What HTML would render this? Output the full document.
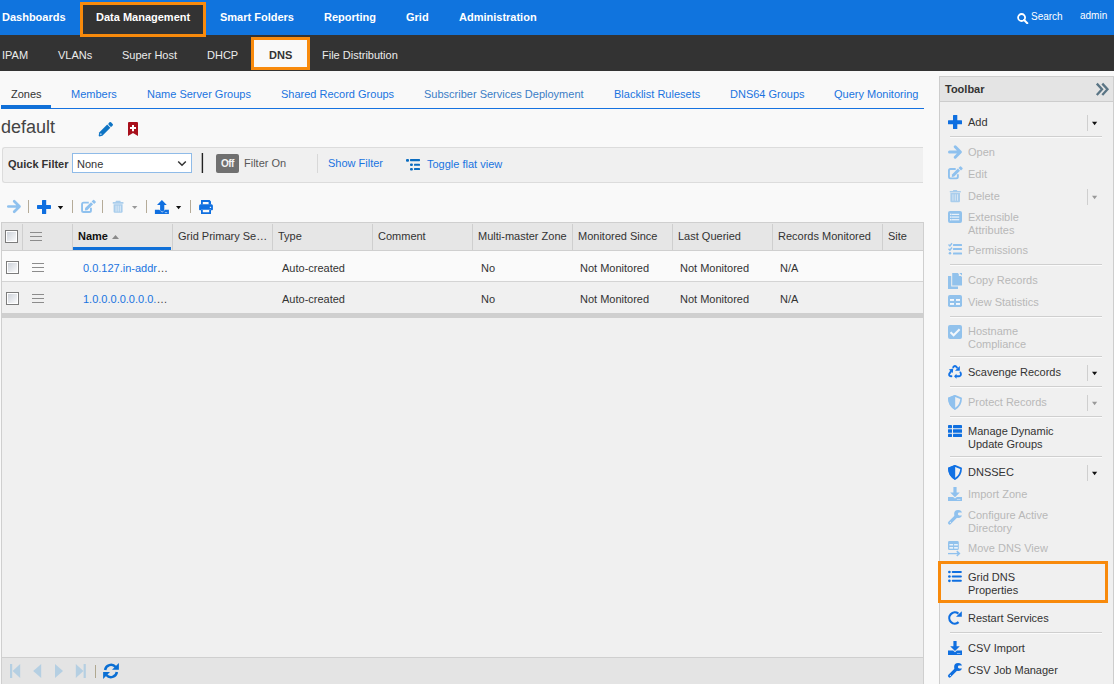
<!DOCTYPE html>
<html><head><meta charset="utf-8">
<style>
*{margin:0;padding:0;box-sizing:border-box}
html,body{width:1114px;height:684px;overflow:hidden;background:#f9f9f9;font-family:"Liberation Sans",sans-serif;font-size:11px;color:#333}
.a{position:absolute}
.t{position:absolute;white-space:nowrap;font-size:11px;line-height:13px}
.b{font-weight:bold}
#top{left:0;top:0;width:1114px;height:35px;background:#1074de}
#sub{left:0;top:35px;width:1114px;height:36px;background:#333}
.nw{color:#fff}
.sw{color:#ececec}
.lk{color:#1a74e0}
.dis{color:#b8b8b8}
.hl{border:3px solid #f88a0c}
.csep{top:224px;width:1px;height:26px;background:#cfcfcf}
.cb{width:13px;height:13px;border:1px solid #7c7c7c;background:linear-gradient(135deg,#c9ced6 0%,#f4f5f7 80%,#fff 100%);box-shadow:inset 0 0 0 1px #fff}
.hb{width:12px;height:9px;border-top:1px solid #8c8c8c;border-bottom:1px solid #8c8c8c}
.hb:after{content:"";position:absolute;left:0;top:3px;width:12px;height:1px;background:#8c8c8c}
</style></head><body>
<!-- top nav -->
<div id="top" class="a"></div>
<div id="sub" class="a"></div>
<div class="a hl" style="left:80px;top:2px;width:126px;height:35px;background:#333"></div>
<div class="t b nw" style="left:2px;top:11px">Dashboards</div>
<div class="t b nw" style="left:96px;top:11px">Data Management</div>
<div class="t b nw" style="left:220px;top:11px">Smart Folders</div>
<div class="t b nw" style="left:324px;top:11px">Reporting</div>
<div class="t b nw" style="left:406px;top:11px">Grid</div>
<div class="t b nw" style="left:459px;top:11px">Administration</div>
<svg class="a" style="left:1017px;top:12px" width="12" height="12" viewBox="0 0 12 12"><circle cx="4.6" cy="5.5" r="3.5" fill="none" stroke="#fff" stroke-width="1.8"/><path d="M7.1 8L10.3 11.2" stroke="#fff" stroke-width="2" stroke-linecap="round"/></svg>
<div class="t nw" style="left:1031px;top:10px;font-size:10px">Search</div>
<div class="t nw" style="left:1080px;top:9px;font-size:10px">admin</div>
<!-- subnav -->
<div class="a hl" style="left:251px;top:37px;width:59px;height:33px;background:#f9f9f9"></div>
<div class="t sw" style="left:2px;top:49px">IPAM</div>
<div class="t sw" style="left:58px;top:49px">VLANs</div>
<div class="t sw" style="left:122px;top:49px">Super Host</div>
<div class="t sw" style="left:207px;top:49px">DHCP</div>
<div class="t b" style="left:269px;top:49px;color:#333">DNS</div>
<div class="t sw" style="left:322px;top:49px">File Distribution</div>
<!-- tabs -->
<div class="a" style="left:1px;top:108px;width:923px;height:1px;background:#1672e0"></div>
<div class="a" style="left:1px;top:105px;width:50px;height:4px;background:#1070d8"></div>
<div class="t" style="left:11px;top:88px">Zones</div>
<div class="t lk" style="left:71px;top:88px">Members</div>
<div class="t lk" style="left:147px;top:88px">Name Server Groups</div>
<div class="t lk" style="left:281px;top:88px">Shared Record Groups</div>
<div class="t" style="left:424px;top:88px;color:#3b7ec6">Subscriber Services Deployment</div>
<div class="t lk" style="left:614px;top:88px">Blacklist Rulesets</div>
<div class="t lk" style="left:730px;top:88px">DNS64 Groups</div>
<div class="t lk" style="left:834px;top:88px">Query Monitoring</div>
<!-- title -->
<div class="t" style="left:1px;top:117px;font-size:18px;line-height:20px;color:#444">default</div>

<!-- filter bar -->
<div class="a" style="left:2px;top:147px;width:921px;height:36px;background:#f0f0f0;border:1px solid #dcdcdc;border-right:none;border-radius:3px 0 0 3px"></div>
<div class="t b" style="left:8px;top:158px">Quick Filter</div>
<div class="a" style="left:72px;top:153px;width:120px;height:20px;background:#fff;border:1px solid #8fbbe8"></div>
<div class="t" style="left:77px;top:158px">None</div>
<svg class="a" style="left:200px;top:153px" width="5" height="21" viewBox="0 0 5 21"><rect x="1.7" y="0" width="1.4" height="20" fill="#222"/></svg>
<div class="a" style="left:216px;top:154px;width:23px;height:19px;background:#707070;border-radius:2px"></div>
<div class="t b" style="left:221px;top:157px;color:#f4f4f4;font-size:10px;letter-spacing:-0.6px">Off</div>
<div class="t" style="left:244px;top:157px;color:#585858">Filter On</div>
<div class="a" style="left:317px;top:154px;width:1px;height:19px;background:#d8d8d8"></div>
<div class="t lk" style="left:328px;top:157px">Show Filter</div>
<div class="t lk" style="left:427px;top:158px">Toggle flat view</div>

<!-- title icons -->
<svg class="a" style="left:98px;top:121px" width="16" height="16" viewBox="0 0 16 16">
<g fill="#0e74c4"><path d="M1.2 11.6L9.2 3.6 12.4 6.8 4.4 14.8 1.4 15.4Q0.6 15.4 0.7 14.6Z"/><rect x="10.4" y="1.66" width="4.5" height="3.4" rx="1.1" transform="rotate(45 12.64 3.36)"/></g>
<circle cx="2.8" cy="13.2" r="0.9" fill="#9cc6e8"/>
</svg>
<svg class="a" style="left:128px;top:122px" width="10" height="14" viewBox="0 0 10 14">
<path d="M0 1Q0 0 1 0H9Q10 0 10 1V14L5 11L0 14Z" fill="#a8101c"/>
<path d="M4 3H6V5.1H8V7.1H6V9.2H4V7.1H2V5.1H4Z" fill="#fff"/>
</svg>
<!-- filter icons -->
<svg class="a" style="left:177px;top:160px" width="10" height="7" viewBox="0 0 10 7"><path d="M1.2 1.5L5 5.3L8.8 1.5" fill="none" stroke="#333" stroke-width="1.5"/></svg>
<svg class="a" style="left:406px;top:157px" width="16" height="16" viewBox="0 0 16 16">
<g fill="#0a6cc0"><rect x="0" y="1.9" width="3" height="2.9" rx="1"/><rect x="4" y="2.1" width="10" height="2.1" rx="0.6"/><rect x="4" y="6.5" width="2.9" height="2.5" rx="1"/><rect x="8" y="6.7" width="6" height="2.1" rx="0.6"/><rect x="4" y="10.9" width="2.9" height="2.6" rx="1"/><rect x="8" y="10.9" width="6" height="2.1" rx="0.6"/></g>
</svg>
<!-- grid toolbar -->
<svg class="a" style="left:0px;top:197px" width="220" height="20" viewBox="0 0 220 20">
<g fill="none" stroke="#8fc1ee" stroke-width="2.7" stroke-linecap="round" stroke-linejoin="round"><path d="M8.3 9.5H19.3M14.2 4.2L19.5 9.5L14.2 14.8"/></g>
<g fill="#b5ab98"><rect x="28" y="3" width="1" height="13"/><rect x="72" y="3" width="1" height="13"/><rect x="102" y="3" width="1" height="13"/><rect x="146" y="3" width="1" height="13"/><rect x="190" y="3" width="1" height="13"/></g>
<g fill="#0f6fe0"><rect x="42" y="3" width="4.2" height="14" rx="0.6"/><rect x="37" y="7.9" width="14" height="4" rx="0.6"/></g>
<path d="M57.8 9H63.2L60.5 12.4Z" fill="#111"/>
<path d="M88.8 5.65H83.6Q82.05 5.65 82.05 7.2V13.4Q82.05 14.95 83.6 14.95H89.4Q90.95 14.95 90.95 13.4V10.8" fill="none" stroke="#8fc1ee" stroke-width="1.9"/>
<path d="M85.14 11.04L91 5.2 93.1 7.3 87.26 13.16 84.9 13.5Z" fill="#8fc1ee"/>
<path d="M91.6 4.6L93.1 3.1Q93.6 2.6 94.1 3.1L95.6 4.6Q96.1 5.1 95.6 5.6L94.1 7.1Z" fill="#8fc1ee"/>
<g fill="#a9cdec"><rect x="115.6" y="3.8" width="5" height="1.5" rx="0.5"/><rect x="112.7" y="5" width="10.8" height="1.8" rx="0.5"/><path d="M113.6 7.3H122.6V14.6Q122.6 15.8 121.4 15.8H114.8Q113.6 15.8 113.6 14.6Z"/></g>
<g fill="#e6f0f8"><rect x="115.6" y="8.6" width="0.9" height="6"/><rect x="117.7" y="8.6" width="0.9" height="6"/><rect x="119.8" y="8.6" width="0.9" height="6"/></g>
<path d="M132 9H137.4L134.7 12Z" fill="#999"/>
<g fill="#0f6fe0"><path d="M161.9 3L166.8 8H164.3V13.6L162.2 14.8L160.1 13.6V8H157Z"/><path d="M154.9 12.7H159.3L162.2 15.4L165.1 12.7H168.9V17H154.9Z"/></g>
<rect x="164.8" y="15.3" width="2.4" height="0.8" fill="#bcd8f5"/>
<path d="M176 9H181.2L178.6 12.2Z" fill="#111"/>
<g fill="#0f6fe0"><path d="M201 3H209.6L211 4.4V7.5H208.6V5.1H202.8V7.5H201Z"/><path d="M200.6 7.2H211.4Q212.9 7.2 212.9 8.7V12.4Q212.9 13.2 212.1 13.2H211V12.6H201V13.2H199.9Q199.1 13.2 199.1 12.4V8.7Q199.1 7.2 200.6 7.2Z"/><path d="M201 12.6H211V17H201ZM202.8 13V15.2H209.2V13Z" fill-rule="evenodd"/></g>
<rect x="209.8" y="9.8" width="1.3" height="1.1" fill="#fff"/>
</svg>
<!-- grid -->
<div class="a" style="left:1px;top:222px;width:923px;height:462px;background:#f0f0f0;border:1px solid #cfcfcf;border-bottom:none"></div>
<div class="a" style="left:2px;top:223px;width:921px;height:28px;background:#e6e6e6;border-bottom:1px solid #cfcfcf"></div>
<div class="a" style="left:2px;top:251px;width:921px;height:31px;background:#fafafa;border-bottom:1px solid #d4d4d4"></div>
<div class="a" style="left:2px;top:282px;width:921px;height:31px;background:#f0f0f0"></div>
<div class="a" style="left:2px;top:313px;width:921px;height:5px;background:#cfcfcf"></div>
<div class="a" style="left:2px;top:657px;width:921px;height:27px;background:#e4e4e4;border-top:1px solid #cfcfcf"></div>
<div class="a csep" style="left:22px"></div>
<div class="a csep" style="left:72px"></div>
<div class="a csep" style="left:172px"></div>
<div class="a csep" style="left:272px"></div>
<div class="a csep" style="left:372px"></div>
<div class="a csep" style="left:472px"></div>
<div class="a csep" style="left:572px"></div>
<div class="a csep" style="left:672px"></div>
<div class="a csep" style="left:772px"></div>
<div class="a csep" style="left:882px"></div>
<div class="a" style="left:73px;top:247px;width:98px;height:3px;background:#1070d8"></div>
<div class="a cb" style="left:5px;top:230px"></div>
<div class="a cb" style="left:6px;top:261px"></div>
<div class="a cb" style="left:6px;top:292px"></div>
<div class="a hb" style="left:30px;top:232px"></div>
<div class="a hb" style="left:32px;top:263px"></div>
<div class="a hb" style="left:32px;top:294px"></div>
<svg class="a" style="left:112px;top:235px" width="7" height="4" viewBox="0 0 7 4"><path d="M0 4L3.5 0L7 4Z" fill="#8a8a8a"/></svg>

<div class="t b" style="left:78px;top:230px;color:#111">Name</div>
<div class="t" style="left:178px;top:230px">Grid Primary Se&hellip;</div>
<div class="t" style="left:278px;top:230px">Type</div>
<div class="t" style="left:378px;top:230px">Comment</div>
<div class="t" style="left:478px;top:230px">Multi-master Zone</div>
<div class="t" style="left:578px;top:230px">Monitored Since</div>
<div class="t" style="left:678px;top:230px">Last Queried</div>
<div class="t" style="left:778px;top:230px">Records Monitored</div>
<div class="t" style="left:888px;top:230px">Site</div>

<div class="t lk" style="left:83px;top:262px">0.0.127.in-addr<span style="color:#444">&hellip;</span></div>
<div class="t" style="left:282px;top:262px">Auto-created</div>
<div class="t" style="left:481px;top:262px">No</div>
<div class="t" style="left:580px;top:262px">Not Monitored</div>
<div class="t" style="left:680px;top:262px">Not Monitored</div>
<div class="t" style="left:780px;top:262px">N/A</div>
<div class="t lk" style="left:83px;top:293px">1.0.0.0.0.0.0.0.<span style="color:#444">&hellip;</span></div>
<div class="t" style="left:282px;top:293px">Auto-created</div>
<div class="t" style="left:481px;top:293px">No</div>
<div class="t" style="left:580px;top:293px">Not Monitored</div>
<div class="t" style="left:680px;top:293px">Not Monitored</div>
<div class="t" style="left:780px;top:293px">N/A</div>

<!-- pager -->
<svg class="a" style="left:10px;top:664px" width="90" height="16" viewBox="0 0 90 16">
<g fill="#b5cfe2"><rect x="0" y="0" width="2.2" height="14"/><path d="M10.2 0V14L2.6 7Z"/>
<path d="M31.2 0V14L23.2 7Z"/><path d="M45 0V14L53 7Z"/>
<path d="M65.8 0V14L73.4 7Z"/><rect x="73.6" y="0" width="2.2" height="14"/></g>
<rect x="85" y="1" width="1" height="13" fill="#b0a890"/>
</svg>
<svg class="a" style="left:98px;top:658px" width="26" height="26" viewBox="0 0 26 26">
<g fill="none" stroke="#0a6fd4" stroke-width="2.5"><path d="M7.1 12A6 6 0 0 1 17.6 9"/><path d="M18.9 14A6 6 0 0 1 8.4 17"/></g>
<path d="M20.9 4.9V11.8H14Z" fill="#0a6fd4"/><path d="M5.1 21V14H12Z" fill="#0a6fd4"/>
</svg>
<!-- toolbar panel -->
<div class="a" style="left:939px;top:76px;width:175px;height:620px;background:#f0f0f0;border:1px solid #cdcdcd"></div>
<div class="a" style="left:940px;top:77px;width:173px;height:25px;background:#e4e4e4;border-bottom:1px solid #cdcdcd"></div>
<div class="t b" style="left:945px;top:83px;font-size:11px">Toolbar</div>
<!-- panel icons -->
<svg class="a" style="left:940px;top:78px" width="174" height="606" viewBox="940 78 174 606">
<!-- >> -->
<g fill="none" stroke="#5a7585" stroke-width="2.3"><path d="M1096.8 83.6L1102 89.3L1096.8 95M1102.3 83.6L1107.5 89.3L1102.3 95"/></g>
<!-- add -->
<g fill="#0f6fe0"><rect x="953" y="115" width="4.3" height="14" rx="0.5"/><rect x="948" y="120.2" width="14" height="4.1" rx="0.5"/></g>
<!-- open -->
<g fill="none" stroke="#8fc1ee" stroke-width="3" stroke-linecap="round" stroke-linejoin="round"><path d="M949.5 152H960M955.2 146.8L960.4 152L955.2 157.2"/></g>
<!-- edit -->
<g transform="translate(866.9 163.4)">
<path d="M88.8 5.65H83.6Q82.05 5.65 82.05 7.2V13.4Q82.05 14.95 83.6 14.95H89.4Q90.95 14.95 90.95 13.4V10.8" fill="none" stroke="#8fc1ee" stroke-width="1.9"/>
<path d="M85.14 11.04L91 5.2 93.1 7.3 87.26 13.16 84.9 13.5Z" fill="#8fc1ee"/>
<path d="M91.6 4.6L93.1 3.1Q93.6 2.6 94.1 3.1L95.6 4.6Q96.1 5.1 95.6 5.6L94.1 7.1Z" fill="#8fc1ee"/>
</g>
<!-- delete -->
<g fill="#a9cdec"><rect x="953" y="190" width="4.2" height="1.4" rx="0.4"/><rect x="949.7" y="191" width="11.2" height="1.5" rx="0.4"/><path d="M950.4 193H960V201Q960 202.2 958.8 202.2H951.6Q950.4 202.2 950.4 201Z"/></g>
<g fill="#dce9f5"><rect x="952.5" y="194.3" width="0.9" height="6.4"/><rect x="954.8" y="194.3" width="0.9" height="6.4"/><rect x="957" y="194.3" width="0.9" height="6.4"/></g>
<!-- ext attrs -->
<rect x="948" y="211" width="14" height="12" rx="2" fill="#92c2ec"/>
<g fill="#f4f8fc"><rect x="951.6" y="213.8" width="7.6" height="1.1"/><rect x="951.6" y="216.5" width="7.6" height="1.1"/><rect x="951.6" y="219.2" width="7.6" height="1.1"/><rect x="950.1" y="213.6" width="1.2" height="1.5"/><rect x="950.1" y="216.3" width="1.2" height="1.5"/><rect x="950.1" y="219" width="1.2" height="1.5"/></g>
<!-- permissions -->
<g fill="none" stroke="#8fc1ee" stroke-width="1.4"><path d="M948.5 244.6L949.9 246L952 243.3M948.5 248.8L949.9 250.2L952 247.5"/></g>
<circle cx="950" cy="253.3" r="1.3" fill="#8fc1ee"/>
<g fill="#8fc1ee"><rect x="953" y="243.9" width="9" height="2" rx="0.5"/><rect x="953" y="248" width="9" height="2" rx="0.5"/><rect x="953" y="252.4" width="9" height="2" rx="0.5"/></g>
<!-- copy -->
<path d="M948 276H951.2V286.4H958V288.9H948Z" fill="#92c2ec"/>
<path d="M952.2 272.9H957.8L962 277.1V285.6H952.2Z" fill="#92c2ec"/>
<path d="M958.8 272.9L962 276.1H958.8Z" fill="#f0f0f0"/><path d="M959.3 272.9L962 275.6V272.9Z" fill="#92c2ec"/>
<!-- view statistics -->
<rect x="948" y="295" width="14" height="12" rx="1.8" fill="#92c2ec"/>
<g fill="#f4f8fc"><rect x="950" y="299" width="4" height="1.9"/><rect x="956" y="299" width="4" height="1.9"/><rect x="950" y="303" width="4" height="1.9"/><rect x="956" y="303" width="4" height="1.9"/></g>
<!-- hostname compliance -->
<rect x="948" y="325" width="14" height="14" rx="2" fill="#92c2ec"/>
<path d="M950.5 332.2L953.6 335.3L959.6 329.2" fill="none" stroke="#f4f8fc" stroke-width="2"/>
<!-- scavenge -->
<g fill="none" stroke="#1473e6" stroke-width="1.9" stroke-linecap="round"><path d="M953.2 367.3Q954.8 364.6 957 367.6"/><path d="M950.8 371.6L949.2 374Q948.6 376 951.4 376.2"/><path d="M960.4 372.4Q962 375.6 959 376.3H956.2"/></g>
<g fill="#1473e6"><path d="M959.8 366V370.8H955Z"/><path d="M948.8 369.6L953.2 368.6L952.8 373Z"/><path d="M954 376.3L956.5 373.8V378.8Z"/></g>
<!-- protect -->
<path d="M955 395.9L961.1 398.4Q961.1 405.2 955 408.9Q948.9 405.2 948.9 398.4Z" fill="none" stroke="#8fc1ee" stroke-width="1.7" stroke-linejoin="round"/>
<path d="M955.2 395V409.9L955 409.9Q948.05 405.6 948.05 397.8L955 395Z" fill="#8fc1ee"/>
<!-- manage dynamic -->
<g fill="#0f6fe0"><rect x="948" y="425" width="4" height="3.2" rx="0.4"/><rect x="953" y="425" width="9" height="3.2" rx="0.4"/><rect x="948" y="429.2" width="4" height="3.6" rx="0.4"/><rect x="953" y="429.2" width="9" height="3.6" rx="0.4"/><rect x="948" y="433.8" width="4" height="3.2" rx="0.4"/><rect x="953" y="433.8" width="9" height="3.2" rx="0.4"/></g>
<!-- dnssec -->
<path d="M955 465.9L961.1 468.4Q961.1 475.2 955 478.9Q948.9 475.2 948.9 468.4Z" fill="none" stroke="#1171e4" stroke-width="1.7" stroke-linejoin="round"/>
<path d="M955.2 465V479.9L955 479.9Q948.05 475.6 948.05 467.8L955 465Z" fill="#1171e4"/>
<!-- import zone -->
<g fill="#8fc1ee"><path d="M953.4 486.9H956.6V492.4H959.8L955 497.2L950.2 492.4H953.4Z"/><path d="M948 496.9H953.2L955 498.6L956.8 496.9H962V501H948Z"/></g>
<rect x="956.9" y="499.2" width="3.5" height="0.7" fill="#d8e8f6"/>
<!-- wrench AD -->
<g transform="translate(0 -153)"><path d="M949.6 675.9L955.6 669.9" stroke="#8fc1ee" stroke-width="3.3" stroke-linecap="round"/><circle cx="958.1" cy="667" r="4" fill="#8fc1ee"/><path d="M962.5 665.6H959.3A1.4 1.4 0 0 0 959.3 668.4H962.5Z" fill="#f0f0f0"/><circle cx="950.4" cy="675.3" r="0.65" fill="#f0f0f0"/></g>
<!-- move dns view -->
<rect x="948" y="541" width="10.8" height="9.1" rx="1.4" fill="#92c2ec"/>
<g fill="#f4f8fc"><rect x="949.4" y="544.1" width="3.7" height="1.3"/><rect x="954.1" y="544.1" width="3.7" height="1.3"/><rect x="949.4" y="547.1" width="3.7" height="1.5"/><rect x="954.1" y="547.1" width="3.7" height="1.5"/></g>
<path d="M948 553.6H958.5" stroke="#8fc1ee" stroke-width="1.3"/><path d="M956.8 551.2L959.3 553.6L956.8 556" fill="none" stroke="#8fc1ee" stroke-width="1.6"/>
<!-- grid dns props -->
<g fill="#0f6fe0"><circle cx="949.4" cy="572" r="1.35"/><circle cx="949.4" cy="576.5" r="1.35"/><circle cx="949.4" cy="580.8" r="1.35"/><rect x="951.7" y="571" width="10.2" height="2" rx="1"/><rect x="951.7" y="575.5" width="10.2" height="2" rx="1"/><rect x="951.7" y="579.8" width="10.2" height="2" rx="1"/></g>
<!-- restart -->
<path d="M958.4 613.6A5.6 5.6 0 1 0 958.6 622.2" fill="none" stroke="#0f6fe0" stroke-width="2.2"/>
<path d="M961.8 611.3V616.7H956Z" fill="#0f6fe0"/>
<!-- csv import -->
<g fill="#0f6fe0"><path d="M953.4 641H956.6V646.2H959.8L955 651L950.2 646.2H953.4Z"/><path d="M948 650.5H953.2L955 652.3L956.8 650.5H962V655H948Z"/></g>
<rect x="956.9" y="653" width="3.5" height="0.7" fill="#b8d4f5"/>
<!-- wrench csv job -->
<g transform="translate(0 0)"><path d="M949.6 675.9L955.6 669.9" stroke="#0f6fe0" stroke-width="3.3" stroke-linecap="round"/><circle cx="958.1" cy="667" r="4" fill="#0f6fe0"/><path d="M962.5 665.6H959.3A1.4 1.4 0 0 0 959.3 668.4H962.5Z" fill="#f0f0f0"/><circle cx="950.4" cy="675.3" r="0.65" fill="#f0f0f0"/></g>
<!-- panel separators -->
<g fill="#cfcfcf"><rect x="950" y="136" width="152" height="1"/><rect x="950" y="264" width="152" height="1"/><rect x="950" y="316" width="152" height="1"/><rect x="950" y="356" width="152" height="1"/><rect x="950" y="386" width="152" height="1"/><rect x="950" y="416" width="152" height="1"/><rect x="950" y="456" width="152" height="1"/><rect x="950" y="632" width="152" height="1"/></g>
<g fill="#fbfbfb"><rect x="950" y="137" width="152" height="1"/><rect x="950" y="265" width="152" height="1"/><rect x="950" y="317" width="152" height="1"/><rect x="950" y="357" width="152" height="1"/><rect x="950" y="387" width="152" height="1"/><rect x="950" y="417" width="152" height="1"/><rect x="950" y="457" width="152" height="1"/><rect x="950" y="633" width="152" height="1"/></g>
<g fill="#cfcfcf"><rect x="1087" y="115" width="1" height="16"/><rect x="1087" y="189" width="1" height="16"/><rect x="1087" y="365" width="1" height="16"/><rect x="1087" y="395" width="1" height="16"/><rect x="1087" y="465" width="1" height="16"/></g>
<g fill="#111"><path d="M1092 121.8H1097.2L1094.6 125.2Z"/><path d="M1092 371.8H1097.2L1094.6 375.2Z"/><path d="M1092 471.8H1097.2L1094.6 475.2Z"/></g>
<g fill="#999"><path d="M1092 195.8H1097.2L1094.6 199.2Z"/><path d="M1092 401.8H1097.2L1094.6 405.2Z"/></g>
</svg>

<div class="t" style="left:968px;top:116px">Add</div>
<div class="t dis" style="left:968px;top:146px">Open</div>
<div class="t dis" style="left:968px;top:168px">Edit</div>
<div class="t dis" style="left:968px;top:190px">Delete</div>
<div class="t dis" style="left:968px;top:211px">Extensible</div>
<div class="t dis" style="left:968px;top:224px">Attributes</div>
<div class="t dis" style="left:968px;top:244px">Permissions</div>
<div class="t dis" style="left:968px;top:274px">Copy Records</div>
<div class="t dis" style="left:968px;top:296px">View Statistics</div>
<div class="t dis" style="left:968px;top:325px">Hostname</div>
<div class="t dis" style="left:968px;top:338px">Compliance</div>
<div class="t" style="left:968px;top:366px">Scavenge Records</div>
<div class="t dis" style="left:968px;top:396px">Protect Records</div>
<div class="t" style="left:968px;top:425px">Manage Dynamic</div>
<div class="t" style="left:968px;top:438px">Update Groups</div>
<div class="t" style="left:968px;top:466px">DNSSEC</div>
<div class="t dis" style="left:968px;top:488px">Import Zone</div>
<div class="t dis" style="left:968px;top:509px">Configure Active</div>
<div class="t dis" style="left:968px;top:522px">Directory</div>
<div class="t dis" style="left:968px;top:542px">Move DNS View</div>
<div class="a hl" style="left:938px;top:561px;width:170px;height:42px"></div>
<div class="t" style="left:968px;top:571px">Grid DNS</div>
<div class="t" style="left:968px;top:584px">Properties</div>
<div class="t" style="left:968px;top:612px">Restart Services</div>
<div class="t" style="left:968px;top:642px">CSV Import</div>
<div class="t" style="left:968px;top:664px">CSV Job Manager</div>
</body></html>
